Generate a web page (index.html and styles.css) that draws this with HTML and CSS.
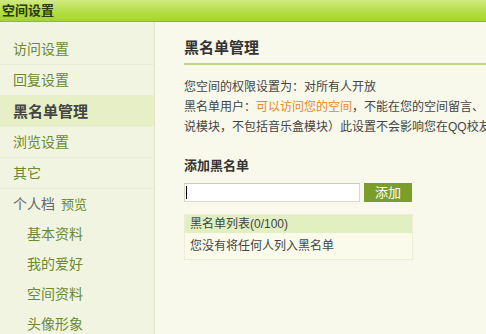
FILE: index.html
```html
<!DOCTYPE html>
<html lang="zh-CN">
<head>
<meta charset="utf-8">
<title>空间设置</title>
<link rel="stylesheet" href="styles.css">
</head>
<body>
<div class="header">空间设置</div>
<div class="main">
  <ul class="sidebar">
    <li class="nav-item">访问设置</li>
    <li class="nav-item">回复设置</li>
    <li class="nav-item active">黑名单管理</li>
    <li class="nav-item">浏览设置</li>
    <li class="nav-item">其它</li>
    <li class="nav-group">个人档 <span class="preview">预览</span></li>
    <li class="nav-sub">基本资料</li>
    <li class="nav-sub">我的爱好</li>
    <li class="nav-sub">空间资料</li>
    <li class="nav-sub">头像形象</li>
  </ul>
  <div class="content">
    <h1 class="title">黑名单管理</h1>
    <p class="desc">您空间的权限设置为：对所有人开放<br>黑名单用户：<span class="link">可以访问您的空间</span>，不能在您的空间留言、<br>说模块，不包括音乐盒模块）此设置不会影响您在QQ校友</p>
    <h2 class="subtitle">添加黑名单</h2>
    <div class="add-row">
      <div class="input-wrap">
        <input class="add-input" type="text">
        <span class="caret"></span>
      </div>
      <button class="add-btn">添加</button>
    </div>
    <div class="list-box">
      <div class="list-head">黑名单列表(0/100)</div>
      <div class="list-body">您没有将任何人列入黑名单</div>
    </div>
  </div>
</div>
</body>
</html>
```

FILE: styles.css
```css
html, body {
  margin: 0;
  padding: 0;
  height: 100%;
  overflow: hidden;
}
body {
  font-family: "Liberation Sans", "Noto Sans CJK SC", sans-serif;
  font-size: 12px;
  color: #444;
  background: #f8f9ea;
}
.header {
  height: 21px;
  line-height: 22px;
  padding-left: 2px;
  font-size: 13px;
  font-weight: bold;
  color: #2c3a10;
  background: linear-gradient(#d0eb80, #b2dc42 60%, #a6d52e);
  border-bottom: 1px solid #8fb82a;
}
.main {
  display: flex;
  height: calc(100% - 22px);
}
.sidebar {
  list-style: none;
  margin: 0;
  padding: 12px 0 0 0;
  width: 154px;
  flex: none;
  background: #f2f4e2;
  border-right: 1px solid #e2e5cb;
  box-shadow: 1px 0 0 #fbfcf2;
}
.nav-item {
  height: 30px;
  line-height: 31px;
  padding-left: 13px;
  font-size: 14px;
  color: #6b8a2e;
  border-bottom: 1px solid #eaedd8;
}
.nav-item.active {
  background: #e6efc6;
  color: #444;
  font-weight: bold;
  font-size: 15px;
}
.nav-group {
  height: 30px;
  line-height: 31px;
  padding-left: 13px;
  font-size: 14px;
  color: #666;
}
.preview {
  font-size: 13px;
  color: #6b8a2e;
  margin-left: 2px;
}
.nav-sub {
  height: 30px;
  line-height: 30px;
  padding-left: 27px;
  font-size: 14px;
  color: #6b8a2e;
}
.content {
  flex: 1;
  padding: 16px 0 0 29px;
  background: #f8f9ea;
  min-width: 0;
}
.title {
  margin: 0;
  font-size: 15px;
  font-weight: bold;
  color: #333;
  line-height: 20px;
  padding-bottom: 5px;
  border-bottom: 2px solid #c1d680;
}
.desc {
  margin: 12px 0 0 0;
  line-height: 20px;
  white-space: nowrap;
  color: #444;
}
.link {
  color: #e8891c;
}
.subtitle {
  margin: 19px 0 0 0;
  font-size: 13px;
  font-weight: bold;
  color: #333;
  line-height: 20px;
}
.add-row {
  display: flex;
  gap: 4px;
  margin-top: 7px;
}
.input-wrap {
  position: relative;
  width: 176px;
  height: 19px;
}
.add-input {
  box-sizing: border-box;
  width: 176px;
  height: 19px;
  margin: 0;
  padding: 0 2px;
  background: #fff;
  border: 1px solid #d8dac8;
  border-top-color: #c8cab6;
  outline: none;
}
.caret {
  position: absolute;
  left: 2px;
  top: 3px;
  width: 1px;
  height: 13px;
  background: #000;
}
.add-btn {
  width: 48px;
  height: 19px;
  margin: 0;
  padding: 0;
  border: none;
  background: #7b9e2b;
  color: #fff;
  font-family: "Liberation Sans", "Noto Sans CJK SC", sans-serif;
  font-size: 13px;
  line-height: 19px;
}
.list-box {
  margin-top: 12px;
  width: 227px;
  border: 1px solid #eceed9;
}
.list-head {
  height: 18px;
  line-height: 19px;
  padding-left: 5px;
  background: #e2efc1;
  color: #444;
}
.list-body {
  height: 26px;
  line-height: 27px;
  padding-left: 5px;
  background: #fafbeb;
  color: #444;
}
```
